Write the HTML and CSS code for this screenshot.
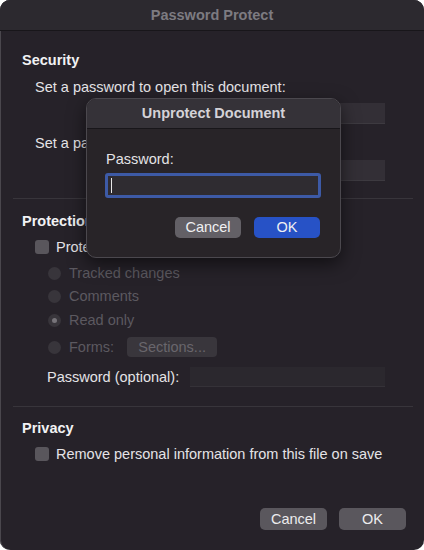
FILE: index.html
```html
<!DOCTYPE html>
<html>
<head>
<meta charset="utf-8">
<link rel="stylesheet" href="styles.css">
</head>
<body>
<div class="window">
  <div class="titlebar">Password Protect</div>
  <div class="content">
    <div class="head h-security">Security</div>
    <div class="label l1">Set a password to open this document:</div>
    <div class="field f1"></div>
    <div class="label l2">Set a password to modify this document:</div>
    <div class="field f2"></div>
    <div class="sep s1"></div>

    <div class="head h-protection">Protection</div>
    <div class="check-row c1"><span class="checkbox"></span><span>Protect document for:</span></div>
    <div class="radio-row r1"><span class="radio"></span><span>Tracked changes</span></div>
    <div class="radio-row r2"><span class="radio"></span><span>Comments</span></div>
    <div class="radio-row r3"><span class="radio on"></span><span>Read only</span></div>
    <div class="radio-row r4"><span class="radio"></span><span>Forms:</span><span class="sections">Sections...</span></div>
    <div class="opt-row"><span class="opt-label">Password (optional):</span><span class="opt-field"></span></div>
    <div class="sep s2"></div>

    <div class="head h-privacy">Privacy</div>
    <div class="check-row c2"><span class="checkbox"></span><span>Remove personal information from this file on save</span></div>

    <div class="buttons">
      <span class="btn">Cancel</span>
      <span class="btn">OK</span>
    </div>
  </div>

  <div class="dialog">
    <div class="d-title">Unprotect Document</div>
    <div class="d-body">
      <div class="d-label">Password:</div>
      <div class="d-input"><span class="caret"></span></div>
      <div class="d-buttons">
        <span class="d-btn cancel">Cancel</span>
        <span class="d-btn ok">OK</span>
      </div>
    </div>
  </div>
</div>
</body>
</html>
```
FILE: styles.css
```css
html, body {
  margin: 0;
  padding: 0;
  background: #ffffff;
}
body {
  font-family: "Liberation Sans", Arial, sans-serif;
  font-size: 14.5px;
  color: #e4e3e6;
}
.window {
  position: relative;
  width: 424px;
  height: 550px;
  background: #262229;
  border-radius: 10px;
  box-shadow: inset 1px 0 0 #4a474d, inset 0 1px 0 #4a474d;
  display: flex;
  flex-direction: column;
  overflow: hidden;
}
.titlebar {
  height: 30px;
  line-height: 30px;
  text-align: center;
  font-weight: bold;
  color: #7d7b81;
  background: #2c292f;
  border-bottom: 1px solid #18161a;
  flex: none;
}
.content {
  flex: 1;
  display: flex;
  flex-direction: column;
  padding: 0 11px 20px 13px;
}
.head {
  height: 18px;
  line-height: 18px;
  padding-left: 9px;
  font-weight: bold;
  color: #f2f2f4;
}
.h-security { margin-top: 20px; }
.h-protection { margin-top: 13px; }
.h-privacy { margin-top: 12px; }
.label {
  height: 18px;
  line-height: 18px;
  padding-left: 22px;
  white-space: nowrap;
}
.l1 { margin-top: 9px; }
.l2 { margin-top: 10px; }
.field {
  height: 21px;
  margin-left: 100px;
  width: 272px;
  background: #332f36;
  box-shadow: inset 0 -1px 0 #3d3a40;
}
.f1 { margin-top: 7px; }
.f2 { margin-top: 8px; }
.sep {
  height: 1px;
  background: #38353b;
}
.s1 { margin-top: 17px; }
.s2 { margin-top: 19px; }
.check-row {
  display: flex;
  align-items: center;
  gap: 7px;
  height: 18px;
  padding-left: 22px;
  white-space: nowrap;
}
.c1 { margin-top: 8px; }
.c2 { margin-top: 8px; }
.checkbox {
  width: 14px;
  height: 14px;
  border-radius: 3px;
  background: #59565c;
  flex: none;
}
.radio-row {
  display: flex;
  align-items: center;
  height: 18px;
  padding-left: 35px;
  color: #5c5960;
  white-space: nowrap;
}
.radio {
  width: 13px;
  height: 13px;
  border-radius: 50%;
  background: #38353b;
  margin-right: 8px;
  flex: none;
  display: flex;
  align-items: center;
  justify-content: center;
}
.radio.on::after {
  content: "";
  width: 5px;
  height: 5px;
  border-radius: 50%;
  background: #77747a;
}
.r1 { margin-top: 8px; }
.r2 { margin-top: 5px; }
.r3 { margin-top: 6px; }
.r4 { margin-top: 8px; height: 20px; }
.sections {
  margin-left: 13px;
  width: 90px;
  height: 20px;
  line-height: 20px;
  text-align: center;
  border-radius: 4px;
  background: #39363c;
  color: #69666c;
}
.opt-row {
  display: flex;
  align-items: center;
  height: 20px;
  margin-top: 10px;
  padding-left: 34px;
  white-space: nowrap;
}
.opt-label {
  width: 143px;
  flex: none;
}
.opt-field {
  width: 195px;
  height: 20px;
  background: #2b282e;
  box-shadow: inset 0 -1px 0 #353238;
}
.buttons {
  margin-top: auto;
  display: flex;
  justify-content: flex-end;
  gap: 12px;
  padding-right: 7px;
}
.btn {
  width: 67px;
  height: 22px;
  line-height: 22px;
  text-align: center;
  border-radius: 5px;
  background: #5a575d;
  color: #ececee;
}

/* overlay dialog */
.dialog {
  position: absolute;
  left: 86px;
  top: 98px;
  width: 255px;
  height: 160px;
  box-sizing: border-box;
  border: 1px solid #4b484e;
  border-radius: 10px;
  background: #282428;
  box-shadow: 0 6px 18px rgba(0, 0, 0, 0.55);
  overflow: hidden;
}
.d-title {
  height: 29px;
  line-height: 29px;
  text-align: center;
  font-weight: bold;
  color: #d4d2d7;
  background: #353238;
  border-bottom: 1px solid #18161a;
}
.d-body {
  padding: 21px 20px 0 18px;
}
.d-label {
  height: 18px;
  line-height: 18px;
  padding-left: 1px;
}
.d-input {
  margin-top: 5px;
  width: 216px;
  height: 25px;
  box-sizing: border-box;
  border: 3px solid #3d5aa6;
  border-radius: 3px;
  background: #2f2c31;
  display: flex;
  align-items: center;
  padding-left: 3px;
}
.caret {
  width: 1px;
  height: 15px;
  background: #e8e8e8;
}
.d-buttons {
  margin-top: 19px;
  display: flex;
  justify-content: flex-end;
  gap: 13px;
}
.d-btn {
  width: 66px;
  height: 21px;
  line-height: 21px;
  text-align: center;
  border-radius: 5px;
  color: #f0f0f2;
}
.d-btn.cancel { background: #636066; }
.d-btn.ok { background: #2752c6; }
```
